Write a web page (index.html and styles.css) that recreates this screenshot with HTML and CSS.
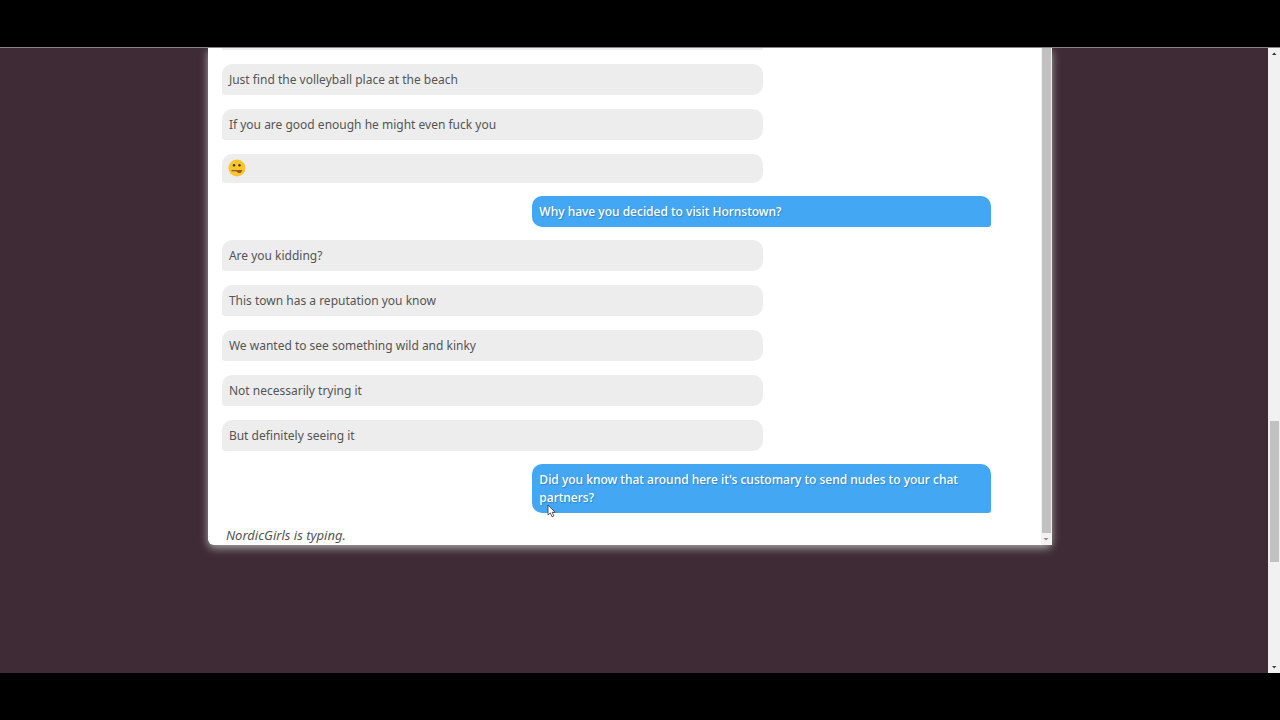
FILE: index.html
```html
<!DOCTYPE html>
<html lang="en">
<head>
    <meta charset="UTF-8">
    <meta name="viewport" content="width=device-width, initial-scale=1.0">
    <title>Chat</title>
    <link rel="stylesheet" href="styles.css">
</head>
<body>
    <div class="viewport">
        <main class="page">
            <section class="chat">
                <div class="messages">
                    <div class="message received clipped"></div>
                    <div class="message received">Just find the volleyball place at the beach</div>
                    <div class="message received">If you are good enough he might even fuck you</div>
                    <div class="message received emoji">
                        <svg width="18" height="18" viewBox="0 0 18 18" role="img" aria-label="Tongue out">
                            <circle cx="9" cy="9" r="8.5" fill="#f6c62f"/>
                            <circle cx="6" cy="6.3" r="1.2" fill="#50341c"/>
                            <circle cx="11.500" cy="6.3" r="1.2" fill="#50341c"/>
                            <path d="M8.500 12h5c0 2.800-4 2.800-5 0z" fill="#c9402a"/>
                            <path d="M4 11.800h9.800" fill="none" stroke="#76451b" stroke-width="1.1" stroke-linecap="round"/>
                        </svg>
                    </div>
                    <div class="message sent">Why have you decided to visit Hornstown?</div>
                    <div class="message received">Are you kidding?</div>
                    <div class="message received">This town has a reputation you know</div>
                    <div class="message received">We wanted to see something wild and kinky</div>
                    <div class="message received">Not necessarily trying it</div>
                    <div class="message received">But definitely seeing it</div>
                    <div class="message sent">Did you know that around here it's customary to send nudes to your chat partners?
                        <svg class="cursor" width="9" height="14" viewBox="0 0 9 14" aria-hidden="true">
                            <path d="M1 1v10l2.3-2.1L5 12.8l1.9-.8-1.700-3.700h3z" fill="#fff" stroke="#333" stroke-width=".8"/>
                        </svg>
                    </div>
                    <p class="typing">NordicGirls is typing.</p>
                </div>
                <div class="chat-scroll">
                    <div class="chat-thumb"></div>
                    <svg width="11" height="12" viewBox="0 0 11 12" aria-hidden="true"><path d="M2.500 5h5L5 7.500z" fill="#8a8a8a"/></svg>
                </div>
            </section>
        </main>
        <div class="page-scroll">
            <svg width="12" height="12" viewBox="0 0 12 12" aria-hidden="true"><path d="M4 7h4.500L6.200 4.500z" fill="#333"/></svg>
            <div class="page-thumb"></div>
            <svg width="12" height="12" viewBox="0 0 12 12" aria-hidden="true"><path d="M4 5h4.500L6.200 7.500z" fill="#444"/></svg>
        </div>
    </div>
</body>
</html>
```
FILE: styles.css
```css
* {
    box-sizing: border-box;
}

body {
    margin: 0;
    padding: 47px 0;
    min-height: 100vh;
    display: flex;
    background-color: #000;
    color: #555;
    font-family: "Noto Sans", sans-serif;
    font-size: 12px;
    line-height: 18px;
}

.viewport {
    flex: 1;
    display: flex;
    border-top: 1px solid #8c8589;
}

.page {
    flex: 1;
    padding-right: 8px;
    background-color: #3f2b35;
    overflow: hidden;
}

.chat {
    width: 67%;
    margin: 0 auto;
    display: flex;
    background-color: #fff;
    border-radius: 0 0 6px 6px;
    box-shadow: 0 3px 8px #aaa;
}

.messages {
    flex: 1;
    display: flex;
    flex-direction: column;
    gap: 13px;
    padding-left: 14px;
}

.message {
    padding: 7px 7px 6px;
}

.received {
    width: 66%;
    background-color: #ededed;
    border-radius: 10px 10px 10px 3px;
}

.received + .received {
    margin-top: 1px;
}

.clipped {
    height: 2px;
    padding: 0;
    border-radius: 0 0 10px 3px;
}

.emoji {
    padding: 5px 6px 6px;
}

.emoji svg {
    display: block;
}

.sent {
    position: relative;
    width: 56%;
    align-self: flex-end;
    margin-right: 50px;
    background-color: #43a7f4;
    border-radius: 10px 10px 3px 10px;
    color: #fff;
    font-weight: 500;
    text-shadow: 1px 1px 1px rgba(0, 0, 0, 0.2);
}

.cursor {
    position: absolute;
    left: 15px;
    top: 40px;
}

.typing {
    margin: 0;
    padding: 0 4px 1px;
    font-size: 13px;
    font-style: italic;
}

.chat-scroll {
    width: 11px;
    display: flex;
    flex-direction: column;
    background-color: #f1f1f1;
}

.chat-thumb {
    flex: 1;
    margin: 0 1px;
    background-color: #c1c1c1;
}

.page-scroll {
    width: 12px;
    display: grid;
    grid-template-rows: 12px 361fr 141fr 99fr 12px;
    background-color: #f1f1f1;
}

.page-thumb {
    grid-row: 3;
    margin: 0 1px 0 2px;
    background-color: #c1c1c1;
}

.page-scroll svg:last-child {
    grid-row: 5;
}
```
